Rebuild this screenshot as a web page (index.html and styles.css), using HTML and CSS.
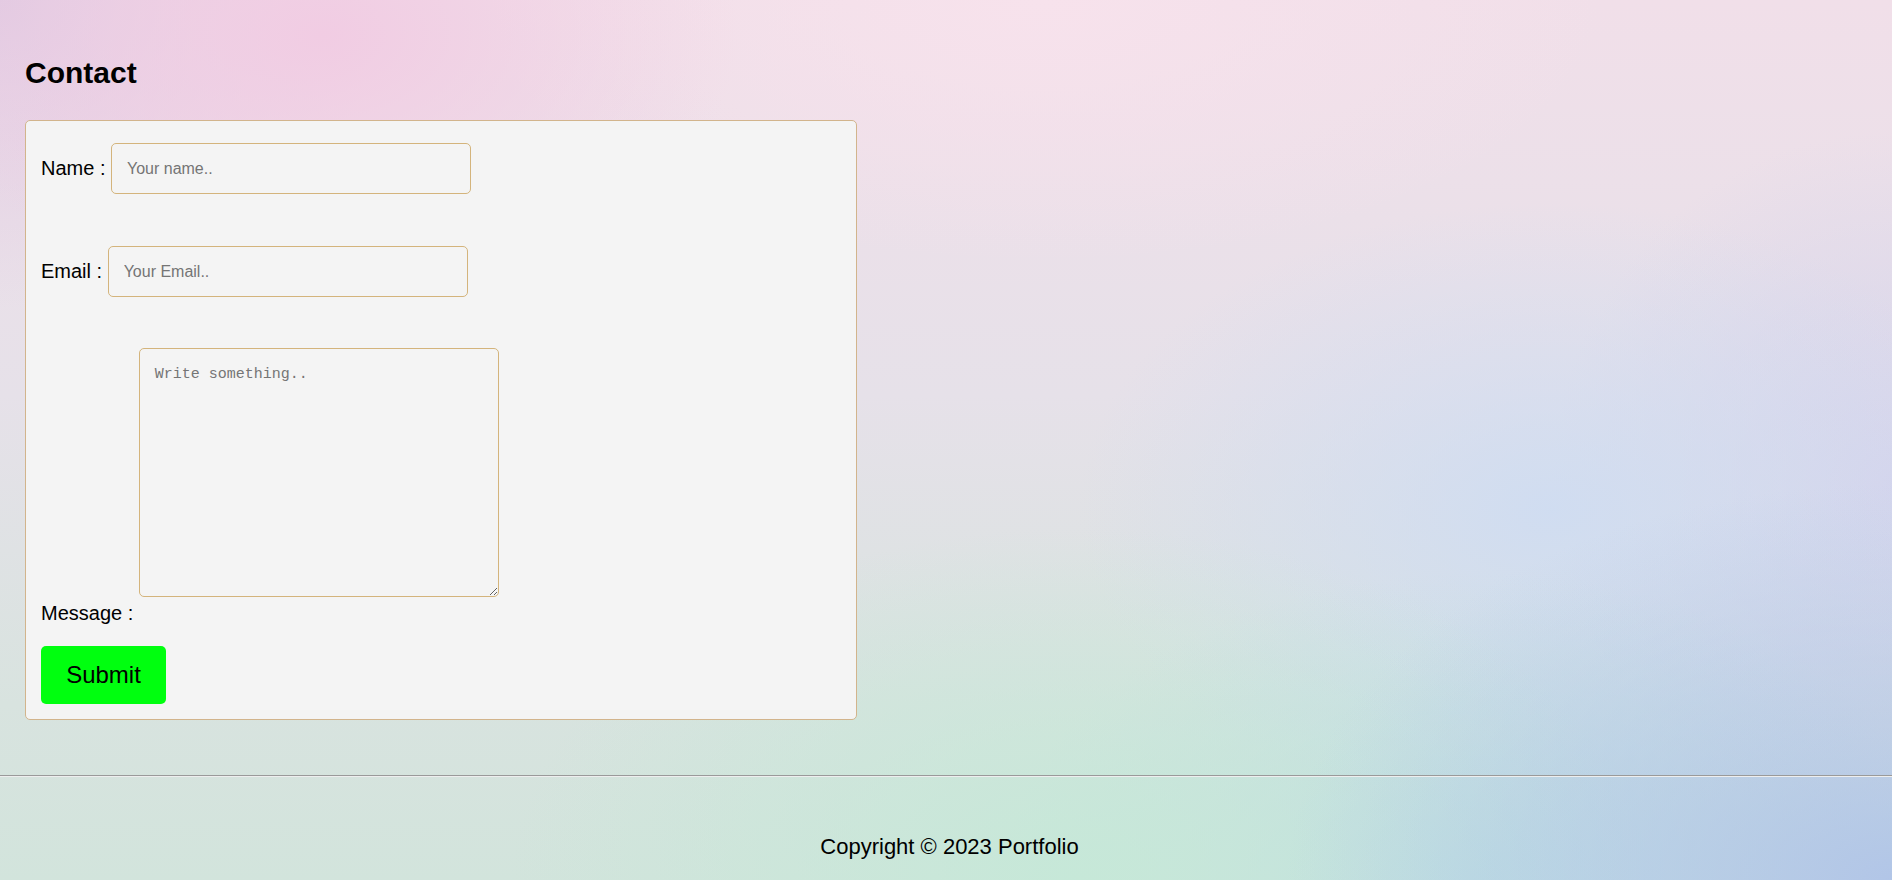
FILE: index.html
```html
<!DOCTYPE html>
<html lang="en">
<head>
<meta charset="utf-8">
<title>Contact</title>
<link rel="stylesheet" href="styles.css">
</head>
<body>
<section class="contact">
  <h2 class="contact-title">Contact</h2>
  <form class="contact-form">
    <div class="field">
      <label class="field-label" for="name">Name :</label>
      <input class="field-input" id="name" type="text" placeholder="Your name..">
    </div>
    <div class="field field-email">
      <label class="field-label" for="email">Email :</label>
      <input class="field-input" id="email" type="email" placeholder="Your Email..">
    </div>
    <div class="field field-message">
      <label class="field-label" for="message">Message :</label>
      <textarea class="field-textarea" id="message" placeholder="Write something.."></textarea>
    </div>
    <button class="submit" type="button">Submit</button>
  </form>
</section>
<footer class="footer">
  <hr class="footer-rule">
  <p class="footer-text">Copyright © 2023 Portfolio</p>
</footer>
</body>
</html>
```

FILE: styles.css
```css
html {
  min-height: 100%;
  background-color: #e6e0e8;
  background-image:
    radial-gradient(ellipse 32% 45% at 100% 100%, rgba(176, 196, 232, 0.95) 0%, rgba(176, 196, 232, 0) 100%),
    radial-gradient(ellipse 30% 40% at 57% 100%, rgba(198, 232, 216, 1) 0%, rgba(198, 232, 216, 0) 100%),
    radial-gradient(ellipse 25% 35% at 78% 100%, rgba(184, 218, 230, 0.9) 0%, rgba(184, 218, 230, 0) 100%),
    radial-gradient(ellipse 25% 35% at 82% 58%, rgba(206, 220, 242, 0.9) 0%, rgba(206, 220, 242, 0) 100%),
    radial-gradient(ellipse 18% 40% at 100% 55%, rgba(212, 210, 236, 0.9) 0%, rgba(212, 210, 236, 0) 100%),
    radial-gradient(ellipse 22% 30% at 17% 4%, rgba(241, 204, 227, 1) 0%, rgba(241, 204, 227, 0) 100%),
    radial-gradient(ellipse 30% 30% at 55% 0%, rgba(247, 226, 236, 1) 0%, rgba(247, 226, 236, 0) 100%),
    radial-gradient(ellipse 20% 35% at 0% 0%, rgba(224, 202, 226, 1) 0%, rgba(224, 202, 226, 0) 100%),
    linear-gradient(180deg, #f1dfe9 0%, #e6e1e9 45%, #d8e3df 80%, #d2e4dc 100%);
}

body {
  margin: 0;
  min-height: 880px;
  font-family: "Liberation Sans", Arial, sans-serif;
  font-size: 20px;
  color: #000;
}

.contact {
  padding: 56px 25px 55px;
}

.contact-title {
  margin: 0 0 30px;
  font-size: 30px;
  font-weight: bold;
  line-height: 34px;
}

.contact-form {
  box-sizing: border-box;
  width: 832px;
  display: flex;
  flex-direction: column;
  align-items: flex-start;
  padding: 22px 15px 15px;
  border: 1px solid #d2b48c;
  border-radius: 5px;
  background: #f4f4f4;
}

.field {
  display: flex;
  align-items: center;
  gap: 5.5px;
}

.field-email {
  margin-top: 52px;
}

.field-message {
  margin-top: 51px;
  align-items: flex-end;
}

.field-label {
  line-height: 23px;
  white-space: nowrap;
}

.field-input {
  box-sizing: border-box;
  width: 360px;
  height: 51px;
  margin: 0;
  padding: 0 15px;
  border: 1px solid #d4b47c;
  border-radius: 5px;
  background: #f4f4f4;
  font-family: "Liberation Sans", Arial, sans-serif;
  font-size: 16px;
  color: #000;
  outline: none;
}

.field-input::placeholder {
  color: #757575;
}

.field-textarea {
  box-sizing: border-box;
  width: 360px;
  height: 249px;
  margin: 0 0 28px;
  padding: 16px 15px;
  border: 1px solid #d4b47c;
  border-radius: 5px;
  background: #f4f4f4;
  font-family: "Liberation Mono", "Courier New", monospace;
  font-size: 15px;
  line-height: 20px;
  color: #000;
  outline: none;
}

.field-textarea::placeholder {
  color: #757575;
}

.submit {
  margin-top: 21px;
  width: 125px;
  height: 58px;
  padding: 0;
  border: none;
  border-radius: 5px;
  background: #00ff0f;
  font-family: "Liberation Sans", Arial, sans-serif;
  font-size: 24px;
  color: #000;
  cursor: pointer;
}

.footer {
  text-align: center;
}

.footer-rule {
  margin: 0;
  border: 0;
  border-top: 1px solid #9a9a9a;
  border-bottom: 1px solid #eeeeee;
  height: 0;
}

.footer-text {
  margin: 57px 0 0;
  padding: 0 0 21px 7px;
  font-size: 22px;
  line-height: 25px;
}
```
